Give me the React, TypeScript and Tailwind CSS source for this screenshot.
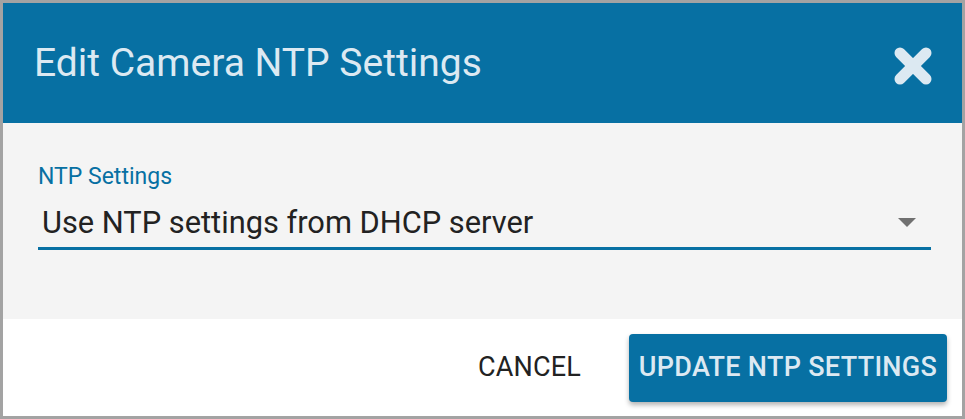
import React from "react";

export default function App() {
  return (
    <div className="w-[965px] h-[419px] bg-[#a3a3a3] p-[3px]" style={{ fontFamily: "Roboto, 'Liberation Sans', sans-serif" }}>
      <div className="w-full h-full flex flex-col bg-white overflow-hidden">
        <div className="h-[120px] bg-[#0770a3] flex items-center justify-between pl-[31px] pr-[30px]">
          <h1 className="text-[39px] leading-none text-[#dce9f2] font-normal">Edit Camera NTP Settings</h1>
          <svg width="38" height="38" viewBox="0 0 38 38" className="mt-[6px]">
            <g stroke="#dce9f2" strokeWidth="11" strokeLinecap="round">
              <line x1="6" y1="6" x2="32" y2="32" />
              <line x1="32" y1="6" x2="6" y2="32" />
            </g>
          </svg>
        </div>
        <div className="h-[196px] bg-[#f4f4f4] pl-[35px] pr-[31px] pt-[42px]">
          <div className="text-[23px] leading-none text-[#0770a3]">NTP Settings</div>
          <div className="mt-[17px] flex items-center justify-between border-b-[3px] border-[#0770a3] pb-[6px]">
            <span className="pl-[4px] text-[30.8px] leading-[36px] text-[#222222]">Use NTP settings from DHCP server</span>
            <svg width="18" height="10" viewBox="0 0 18 10" className="mr-[15px]">
              <path d="M0 0 L18 0 L9 9 Z" fill="#707070" />
            </svg>
          </div>
        </div>
        <div className="flex-1 flex items-center justify-end pr-[15px] gap-[48px]">
          <button className="text-[27px] text-[#222222] tracking-[0.2px]">CANCEL</button>
          <button className="w-[318px] h-[68px] rounded-[4px] bg-[#0770a3] text-[#dce9f2] text-[27px] font-medium tracking-[0.3px] shadow-[0_3px_5px_rgba(0,0,0,0.3)]">UPDATE NTP SETTINGS</button>
        </div>
      </div>
    </div>
  );
}
